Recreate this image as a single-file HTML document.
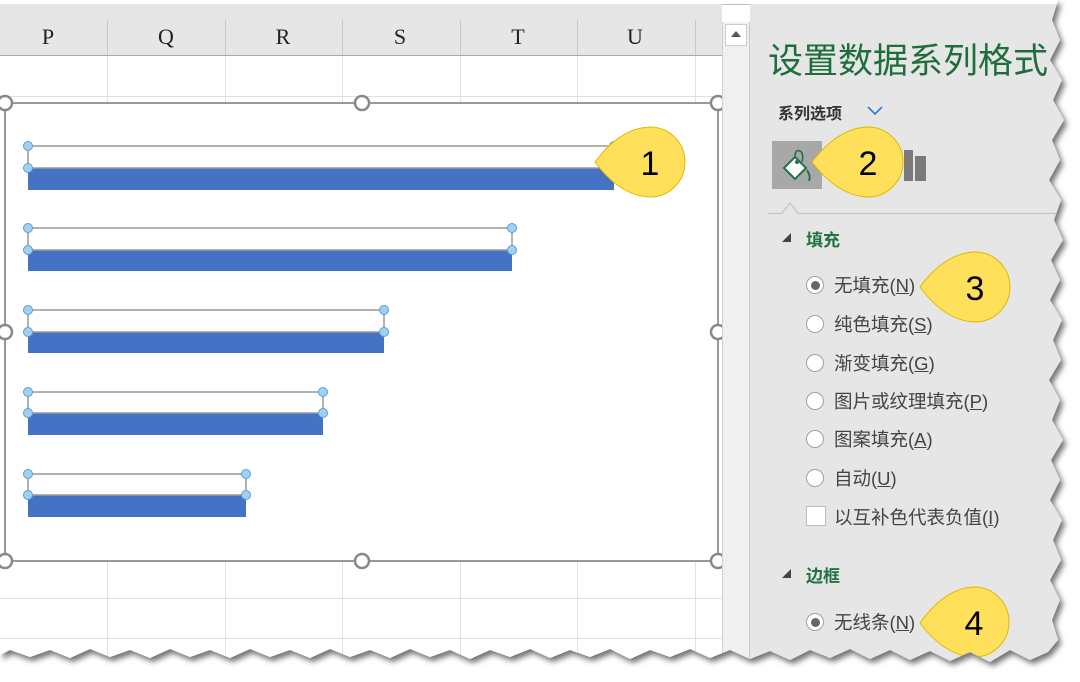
<!DOCTYPE html>
<html><head><meta charset="utf-8"><style>
body{margin:0;width:1080px;height:678px;background:#fff;overflow:hidden;font-family:"Liberation Sans","Noto Sans CJK SC",sans-serif;}
#wrap{position:absolute;left:0;top:0;width:1080px;height:678px;filter:drop-shadow(3px 4px 3px rgba(0,0,0,.55));}
#clip{position:absolute;left:0;top:0;width:1080px;height:678px;background:#fff;
clip-path:polygon(0 0,1058px 0,1052px 20px,1060px 40px,1050px 60px,1062px 80px,1053px 100px,1064px 120px,1052px 140px,1060px 160px,1049px 180px,1061px 200px,1054px 220px,1063px 240px,1051px 260px,1060px 280px,1050px 300px,1062px 320px,1053px 340px,1061px 360px,1049px 380px,1060px 400px,1052px 420px,1063px 440px,1051px 460px,1060px 480px,1050px 500px,1062px 520px,1053px 540px,1061px 560px,1050px 580px,1060px 600px,1052px 620px,1058px 640px,1048px 652px,1030px 660px,1010px 650px,990px 662px,970px 652px,950px 661px,930px 651px,910px 660px,890px 650px,870px 659px,850px 649px,830px 658px,810px 650px,790px 660px,770px 651px,750px 659px,730px 650px,710px 658px,690px 649px,670px 657px,650px 650px,630px 659px,610px 649px,590px 657px,570px 650px,550px 658px,530px 649px,510px 657px,490px 650px,470px 659px,450px 650px,430px 657px,410px 649px,390px 658px,370px 650px,350px 657px,330px 649px,310px 658px,290px 650px,270px 657px,250px 649px,230px 658px,210px 650px,190px 657px,170px 649px,150px 658px,130px 650px,110px 657px,90px 649px,70px 658px,50px 650px,30px 657px,10px 650px,0 655px);}
.abs{position:absolute}
.col{position:absolute;top:24px;font-family:"Liberation Serif",serif;font-size:22px;color:#222;width:40px;text-align:center}
.panel{position:absolute;left:750px;top:4px;width:330px;height:678px;background:#e6e6e6}
.rad{position:absolute;left:806px;width:18px;height:18px;border:1px solid #a0a0a0;border-radius:50%;background:#fff;box-sizing:border-box}
.lab{position:absolute;left:834px;font-size:18.5px;color:#444;white-space:nowrap}
.lab u{text-decoration:underline}
.hd{position:absolute;left:806px;font-size:17px;font-weight:bold;color:#217346}
.tri{position:absolute;left:782px;width:0;height:0;border-left:9px solid transparent;border-bottom:9px solid #444}
</style></head><body>
<div id="wrap"><div id="clip">
<div class="abs" style="left:0;top:0;width:1080px;height:4px;background:#fff;border-bottom:1px solid #bbb"></div>
<div class="abs" style="left:0;top:4px;width:722px;height:678px;background:#fff"></div>
<div class="abs" style="left:0;top:4px;width:722px;height:51px;background:#e6e6e6;border-bottom:1px solid #aaa"></div>
<svg class="abs" style="left:0;top:0" width="722" height="678">
<g stroke="#c8c8c8" stroke-width="1">
<line x1="107.5" y1="20" x2="107.5" y2="55"/><line x1="225.5" y1="20" x2="225.5" y2="55"/><line x1="342.5" y1="20" x2="342.5" y2="55"/><line x1="460.5" y1="20" x2="460.5" y2="55"/><line x1="577.5" y1="20" x2="577.5" y2="55"/><line x1="695.5" y1="20" x2="695.5" y2="55"/>
</g>
<g stroke="#e0e0e0" stroke-width="1">
<line x1="107.5" y1="56" x2="107.5" y2="678"/><line x1="225.5" y1="56" x2="225.5" y2="678"/><line x1="342.5" y1="56" x2="342.5" y2="678"/><line x1="460.5" y1="56" x2="460.5" y2="678"/><line x1="577.5" y1="56" x2="577.5" y2="678"/><line x1="695.5" y1="56" x2="695.5" y2="678"/>
<line x1="0" y1="96.5" x2="722" y2="96.5"/><line x1="0" y1="598.5" x2="722" y2="598.5"/><line x1="0" y1="638.5" x2="722" y2="638.5"/>
</g>
<rect x="5" y="103" width="713" height="458" fill="#fff" stroke="#999" stroke-width="2"/>
<g fill="#4472c4"><rect x="28" y="168" width="586" height="22"/><rect x="28" y="250" width="484" height="21"/><rect x="28" y="332" width="356" height="21"/><rect x="28" y="413" width="295" height="22"/><rect x="28" y="495" width="218" height="22"/></g>
<g fill="none" stroke="#999" stroke-width="1.5"><rect x="28" y="146" width="586" height="22"/><rect x="28" y="228" width="484" height="22"/><rect x="28" y="310" width="356" height="22"/><rect x="28" y="392" width="295" height="21"/><rect x="28" y="474" width="218" height="21"/></g>
<g fill="#9fd0f5" stroke="#5a9fd8" stroke-width="1">
<circle cx="28" cy="146" r="4.5"/><circle cx="28" cy="168" r="4.5"/><circle cx="614" cy="146" r="4.5"/>
<circle cx="28" cy="228" r="4.5"/><circle cx="28" cy="250" r="4.5"/><circle cx="512" cy="228" r="4.5"/><circle cx="512" cy="250" r="4.5"/>
<circle cx="28" cy="310" r="4.5"/><circle cx="28" cy="332" r="4.5"/><circle cx="384" cy="310" r="4.5"/><circle cx="384" cy="332" r="4.5"/>
<circle cx="28" cy="392" r="4.5"/><circle cx="28" cy="413" r="4.5"/><circle cx="323" cy="392" r="4.5"/><circle cx="323" cy="413" r="4.5"/>
<circle cx="28" cy="474" r="4.5"/><circle cx="28" cy="495" r="4.5"/><circle cx="246" cy="474" r="4.5"/><circle cx="246" cy="495" r="4.5"/>
</g>
<g fill="#fff" stroke="#888" stroke-width="2.5">
<circle cx="5" cy="103" r="7"/><circle cx="362" cy="103" r="7"/><circle cx="718" cy="103" r="7"/>
<circle cx="5" cy="332" r="7"/><circle cx="718" cy="332" r="7"/>
<circle cx="5" cy="561" r="7"/><circle cx="362" cy="561" r="7"/><circle cx="718" cy="561" r="7"/>
</g>
</svg>
<div class="col" style="left:28px">P</div><div class="col" style="left:146px">Q</div><div class="col" style="left:263px">R</div><div class="col" style="left:380px">S</div><div class="col" style="left:498px">T</div><div class="col" style="left:615px">U</div>
<div class="abs" style="left:722px;top:22px;width:28px;height:656px;background:#f0f0f0;border-left:1px solid #d0d0d0;border-right:1px solid #c8c8c8;box-sizing:border-box"></div>
<div class="abs" style="left:725px;top:24px;width:22px;height:22px;background:#fff;border:1px solid #ccc;box-sizing:border-box"></div>
<div class="abs" style="left:731px;top:31px;width:0;height:0;border-left:5px solid transparent;border-right:5px solid transparent;border-bottom:6px solid #555"></div>
<div class="panel"></div>
<div class="abs" style="left:768px;top:33px;font-size:35px;color:#1e6e3c;white-space:nowrap">设置数据系列格式</div>
<div class="abs" style="left:778px;top:100px;font-size:16px;font-weight:bold;color:#333">系列选项</div>
<svg class="abs" style="left:866px;top:104px" width="18" height="12"><path d="M2 3 L9 10 L16 3" fill="none" stroke="#2b7cd3" stroke-width="1.6"/></svg>
<div class="abs" style="left:772px;top:141px;width:50px;height:48px;background:#a8a8a8"></div>
<svg class="abs" style="left:780px;top:146px" width="40" height="40"><path d="M4 22 L15 11 L26 22 L15 33 Z" fill="#fff" stroke="#217346" stroke-width="2"/><path d="M15 11 Q15 3 20 5 Q24 7 22 16" fill="none" stroke="#217346" stroke-width="1.6"/><circle cx="17" cy="16" r="2" fill="#217346"/><path d="M27 24 Q31 30 29 35" fill="none" stroke="#217346" stroke-width="2"/></svg>
<div class="abs" style="left:904px;top:150px;width:9px;height:31px;background:#7a7a7a"></div>
<div class="abs" style="left:915px;top:156px;width:11px;height:25px;background:#7a7a7a"></div>
<svg class="abs" style="left:768px;top:198px" width="290" height="18"><path d="M0 15.5 H14 L22 5 L30 15.5 H290" fill="none" stroke="#c4c4c4" stroke-width="1.2"/></svg>
<div class="tri" style="top:233px"></div><div class="hd" style="top:226px">填充</div>
<div class="rad" style="top:276px"><div style="position:absolute;left:3.5px;top:3.5px;width:9px;height:9px;border-radius:50%;background:#666"></div></div>
<div class="lab" style="top:272px">无填充(<u>N</u>)</div>
<div class="rad" style="top:315px"></div><div class="lab" style="top:311px">纯色填充(<u>S</u>)</div>
<div class="rad" style="top:354px"></div><div class="lab" style="top:350px">渐变填充(<u>G</u>)</div>
<div class="rad" style="top:392px"></div><div class="lab" style="top:388px">图片或纹理填充(<u>P</u>)</div>
<div class="rad" style="top:430px"></div><div class="lab" style="top:426px">图案填充(<u>A</u>)</div>
<div class="rad" style="top:469px"></div><div class="lab" style="top:465px">自动(<u>U</u>)</div>
<div class="abs" style="left:806px;top:506px;width:20px;height:20px;background:#fff;border:1px solid #bbb;box-sizing:border-box"></div>
<div class="lab" style="top:504px">以互补色代表负值(<u>I</u>)</div>
<div class="tri" style="top:569px"></div><div class="hd" style="top:562px">边框</div>
<div class="rad" style="top:613px"><div style="position:absolute;left:3.5px;top:3.5px;width:9px;height:9px;border-radius:50%;background:#666"></div></div>
<div class="lab" style="top:609px">无线条(<u>N</u>)</div>
<svg class="abs" style="left:0;top:0" width="1080" height="678">
<g fill="#ffe05a" stroke="#e0b800" stroke-width="1">
<path d="M595 162 Q620 128 650 127 A35 35 0 1 1 650 197 Q620 196 595 162Z"/>
<path d="M812 162 Q838 128 868 127 A35 35 0 1 1 868 197 Q838 196 812 162Z"/>
<path d="M920 287 Q945 253 975 252 A35 35 0 1 1 975 322 Q945 321 920 287Z"/>
<path d="M920 623 Q945 588 974 587 A35 35 0 1 1 974 657 Q945 656 920 623Z"/>
</g>
<g font-family="Liberation Sans,sans-serif" font-size="34" fill="#000" text-anchor="middle">
<text x="650" y="175">1</text><text x="868" y="175">2</text><text x="975" y="300">3</text><text x="974" y="635">4</text>
</g>
</svg>
</div></div>
</body></html>
